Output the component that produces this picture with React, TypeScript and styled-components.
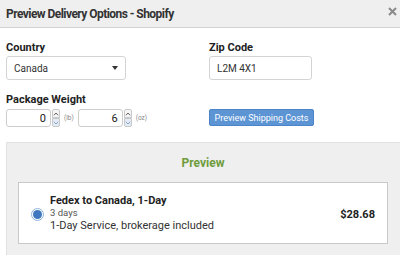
import styled, { createGlobalStyle } from 'styled-components';

const GlobalStyle = createGlobalStyle`
  body {
    margin: 0;
    background: #fff;
    font-family: Roboto, 'Liberation Sans', sans-serif;
    color: #222;
    overflow: hidden;
  }
`;

const Header = styled.div`
  height: 27px;
  background: #efefef;
  border-bottom: 1px solid #d2d2d2;
  display: flex;
  align-items: center;
  justify-content: space-between;
  padding: 0 3px 0 6px;
`;

const Title = styled.h1`
  margin: 0;
  font-size: 12px;
  font-weight: 700;
  letter-spacing: -0.55px;
  color: #333;
`;

const Close = styled.svg`
  margin-top: -4px;
`;

const Body = styled.div`
  padding: 13px 0 0 6px;
`;

const Grid = styled.div`
  display: grid;
  grid-template-columns: 203px 1fr;
  row-gap: 13px;
`;

const Field = styled.div`
  display: flex;
  flex-direction: column;
  align-items: flex-start;
`;

const Label = styled.label`
  font-size: 11px;
  font-weight: 700;
  line-height: 13px;
  color: #222;
  margin-bottom: 2px;
`;

const Box = styled.div<{ $w: number; $h: number }>`
  box-sizing: border-box;
  width: ${p => p.$w}px;
  height: ${p => p.$h}px;
  border: 1px solid #d4d4d4;
  border-radius: 3px;
  background: #fff;
  display: flex;
  align-items: center;
  padding: 0 7px;
  font-size: 10px;
  color: #333;
`;

const Caret = styled.span`
  margin-left: auto;
  width: 0;
  height: 0;
  border-left: 3px solid transparent;
  border-right: 3px solid transparent;
  border-top: 4px solid #333;
`;

const WeightRow = styled.div`
  display: flex;
  align-items: center;
  height: 18px;
  margin-top: 1px;
`;

const NumBox = styled.div<{ $w: number }>`
  box-sizing: border-box;
  width: ${p => p.$w}px;
  height: 18px;
  border: 1px solid #cdcdcd;
  border-radius: 3px;
  background: #fff;
  display: flex;
  align-items: center;
  justify-content: flex-end;
  padding-right: 4px;
  font-size: 11px;
  color: #222;
`;

const Spinner = styled.div`
  display: flex;
  flex-direction: column;
  margin-left: 1px;
`;

const SpinBtn = styled.div<{ $down?: boolean }>`
  box-sizing: border-box;
  width: 8px;
  height: 9px;
  border: 1px solid #c8c8c8;
  border-radius: ${p => (p.$down ? '0 0 2px 2px' : '2px 2px 0 0')};
  background: ${p => (p.$down ? '#e3ecf5' : '#f6f6f6')};
  display: flex;
  align-items: center;
  justify-content: center;
`;

const Unit = styled.span`
  font-size: 6.5px;
  color: #888;
  margin: 0 4px;
`;

const Button = styled.button`
  box-sizing: border-box;
  width: 105px;
  height: 17px;
  margin-top: 1px;
  background: #5c94d4;
  border: 1px solid #4b84c8;
  border-radius: 2px;
  color: #fff;
  font-family: inherit;
  font-size: 9px;
  padding: 0;
`;

const Panel = styled.div`
  box-sizing: border-box;
  margin-top: 15px;
  height: 115px;
  background: #efefef;
  border-top: 1px solid #e0e0e0;
  border-left: 1px solid #e2e2e2;
  padding: 14px 12px 0 11px;
`;

const PanelTitle = styled.div`
  text-align: center;
  color: #6e9c3c;
  font-size: 12px;
  font-weight: 700;
  line-height: 14px;
  margin-bottom: 12px;
  margin-top: -1px;
`;

const Card = styled.div`
  box-sizing: border-box;
  height: 62px;
  background: #fff;
  border: 1px solid #c9c9c9;
  display: flex;
  align-items: center;
  padding: 0 12px;
`;

const Radio = styled.span`
  box-sizing: border-box;
  width: 13px;
  height: 13px;
  border-radius: 50%;
  border: 1px solid #8fb2dc;
  display: flex;
  align-items: center;
  justify-content: center;
  margin-right: 6px;
  margin-top: 2px;
  &::after {
    content: '';
    width: 9px;
    height: 9px;
    border-radius: 50%;
    background: #3f78c0;
  }
`;

const Info = styled.div`
  flex: 1;
  display: flex;
  flex-direction: column;
`;

const Carrier = styled.div`
  font-size: 11px;
  font-weight: 700;
  line-height: 13px;
  color: #222;
`;

const Days = styled.div`
  font-size: 9.5px;
  line-height: 12px;
  color: #555;
`;

const Desc = styled.div`
  font-size: 11px;
  line-height: 13px;
  color: #333;
`;

const Price = styled.div`
  font-size: 11px;
  font-weight: 700;
  color: #222;
  margin-top: 2px;
`;

function Arrow({ up }: { up?: boolean }) {
  return (
    <svg width="6" height="4" viewBox="0 0 6 4">
      <path
        d={up ? 'M0.8 3.3 L3 1 L5.2 3.3' : 'M0.8 0.8 L3 3 L5.2 0.8'}
        fill="none"
        stroke={up ? '#555' : '#7a9cc4'}
        strokeWidth="0.9"
      />
    </svg>
  );
}

function NumberInput({ value, width }: { value: string; width: number }) {
  return (
    <>
      <NumBox $w={width}>{value}</NumBox>
      <Spinner>
        <SpinBtn><Arrow up /></SpinBtn>
        <SpinBtn $down><Arrow /></SpinBtn>
      </Spinner>
    </>
  );
}

export default function App() {
  return (
    <>
      <GlobalStyle />
      <Header>
        <Title>Preview Delivery Options - Shopify</Title>
        <Close width="9" height="9" viewBox="0 0 9 9">
          <path d="M1 1 L8 8 M8 1 L1 8" stroke="#8a8a8a" strokeWidth="2" />
        </Close>
      </Header>
      <Body>
        <Grid>
          <Field>
            <Label>Country</Label>
            <Box $w={120} $h={24}>
              Canada
              <Caret />
            </Box>
          </Field>
          <Field>
            <Label>Zip Code</Label>
            <Box $w={103} $h={24}>L2M 4X1</Box>
          </Field>
          <Field>
            <Label>Package Weight</Label>
            <WeightRow>
              <NumberInput value="0" width={45} />
              <Unit>(lb)</Unit>
              <NumberInput value="6" width={45} />
              <Unit>(oz)</Unit>
            </WeightRow>
          </Field>
          <Field>
            <Label>&nbsp;</Label>
            <Button>Preview Shipping Costs</Button>
          </Field>
        </Grid>
        <Panel>
          <PanelTitle>Preview</PanelTitle>
          <Card>
            <Radio />
            <Info>
              <Carrier>Fedex to Canada, 1-Day</Carrier>
              <Days>3 days</Days>
              <Desc>1-Day Service, brokerage included</Desc>
            </Info>
            <Price>$28.68</Price>
          </Card>
        </Panel>
      </Body>
    </>
  );
}
